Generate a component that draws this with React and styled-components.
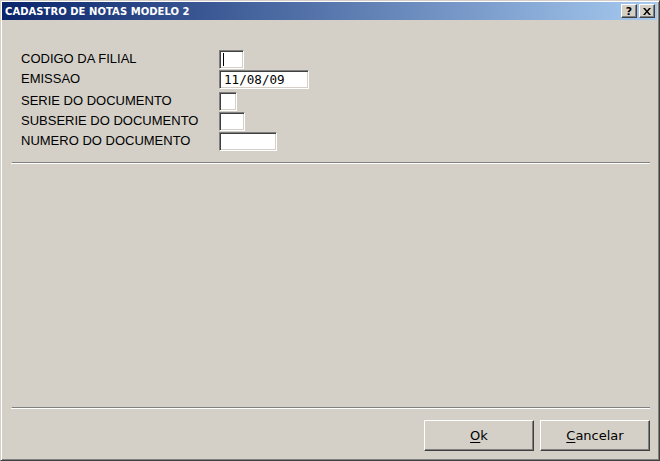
import React from 'react'
import styled, { createGlobalStyle } from 'styled-components'

const GlobalStyle = createGlobalStyle`
  html, body {
    margin: 0;
    padding: 0;
    background: #d4d0c8;
  }
`

const Window = styled.div`
  width: 660px;
  height: 461px;
  box-sizing: border-box;
  display: flex;
  flex-direction: column;
  background: #d4d0c8;
  border-style: solid;
  border-width: 1px;
  border-color: #d4d0c8 #404040 #404040 #d4d0c8;
  box-shadow: inset 1px 1px #ffffff, inset -1px -1px #808080;
  padding: 1px 2px 2px 1px;
  font-family: "Liberation Sans", Arial, sans-serif;
`

const TitleBar = styled.div`
  height: 18px;
  flex: none;
  display: flex;
  align-items: center;
  padding: 0 2px 0 3px;
  background: linear-gradient(to right, #0a246a, #a6caf0);
`

const Title = styled.span`
  flex: 1;
  color: #ffffff;
  font-family: "DejaVu Sans", Tahoma, sans-serif;
  font-weight: bold;
  font-size: 10px;
  letter-spacing: 0.05px;
  white-space: nowrap;
`

const CaptionButton = styled.button`
  width: 16px;
  height: 14px;
  margin-left: ${p => (p.$first ? 0 : 2)}px;
  padding: 0;
  box-sizing: border-box;
  display: flex;
  align-items: center;
  justify-content: center;
  background: #d4d0c8;
  border-style: solid;
  border-width: 1px;
  border-color: #ffffff #404040 #404040 #ffffff;
  box-shadow: inset -1px -1px #808080;
  font-family: "DejaVu Sans", Tahoma, sans-serif;
  font-weight: bold;
  font-size: 11px;
  line-height: 1;
  color: #000;
`

const Body = styled.div`
  flex: 1;
  display: flex;
  flex-direction: column;
  padding: 30px 5px 7px 0;
`

const Form = styled.div`
  display: flex;
  flex-direction: column;
  padding-left: 19px;
`

const Row = styled.div`
  display: flex;
  align-items: flex-start;
  height: ${p => p.$h}px;
`

const Label = styled.span`
  width: 198px;
  font-size: 13px;
  line-height: 17px;
  color: #000;
  white-space: nowrap;
`

const Field = styled.div`
  position: relative;
  width: ${p => p.$w}px;
  height: 19px;
  box-sizing: border-box;
  background: #ffffff;
  border-style: solid;
  border-width: 1px;
  border-color: #808080 #ffffff #ffffff #808080;
  box-shadow: inset 1px 1px #404040, inset -1px -1px #d4d0c8;
  padding: 0 0 0 4px;
  font-family: "DejaVu Sans Mono", "Liberation Mono", monospace;
  font-size: 12.6px;
  line-height: 17px;
  color: #000;
`

const Caret = styled.span`
  position: absolute;
  left: 3px;
  top: 2px;
  width: 1px;
  height: 13px;
  background: #000;
`

const Separator = styled.div`
  height: 0;
  margin: ${p => p.$top || 0}px 2px 0 9px;
  border-top: 1px solid #808080;
  border-bottom: 1px solid #ffffff;
  border-left: 1px solid #ffffff;
`

const Spacer = styled.div`
  flex: 1;
`

const Footer = styled.div`
  display: flex;
  justify-content: flex-end;
  gap: 6px;
  margin-top: 11px;
  padding-right: 2px;
`

const Button = styled.button`
  width: 110px;
  height: 31px;
  box-sizing: border-box;
  background: #d4d0c8;
  border-style: solid;
  border-width: 1px;
  border-color: #ffffff #404040 #404040 #ffffff;
  box-shadow: inset -1px -1px #808080;
  font-family: "DejaVu Sans", Tahoma, sans-serif;
  font-size: 13px;
  color: #000;
  padding: 0;

  u {
    text-decoration: underline;
    text-underline-offset: 2px;
  }
`

const fields = [
  { label: 'CODIGO DA FILIAL', w: 25, h: 20, caret: true },
  { label: 'EMISSAO', w: 90, h: 22, value: '11/08/09' },
  { label: 'SERIE DO DOCUMENTO', w: 18, h: 20 },
  { label: 'SUBSERIE DO DOCUMENTO', w: 26, h: 20 },
  { label: 'NUMERO DO DOCUMENTO', w: 58, h: 19 },
]

export default function App() {
  return (
    <>
      <GlobalStyle />
      <Window>
        <TitleBar>
          <Title>CADASTRO DE NOTAS MODELO 2</Title>
          <CaptionButton $first>?</CaptionButton>
          <CaptionButton>
            <svg width="8" height="7" viewBox="0 0 8 7">
              <path d="M0 0h2l2 2.5L6 0h2L5 3.5 8 7H6L4 4.5 2 7H0l3-3.5z" fill="#000" />
            </svg>
          </CaptionButton>
        </TitleBar>
        <Body>
          <Form>
            {fields.map(f => (
              <Row key={f.label} $h={f.h}>
                <Label>{f.label}</Label>
                <Field $w={f.w}>
                  {f.caret && <Caret />}
                  {f.value}
                </Field>
              </Row>
            ))}
          </Form>
          <Separator $top={11} />
          <Spacer />
          <Separator />
          <Footer>
            <Button><u>O</u>k</Button>
            <Button><u>C</u>ancelar</Button>
          </Footer>
        </Body>
      </Window>
    </>
  )
}
